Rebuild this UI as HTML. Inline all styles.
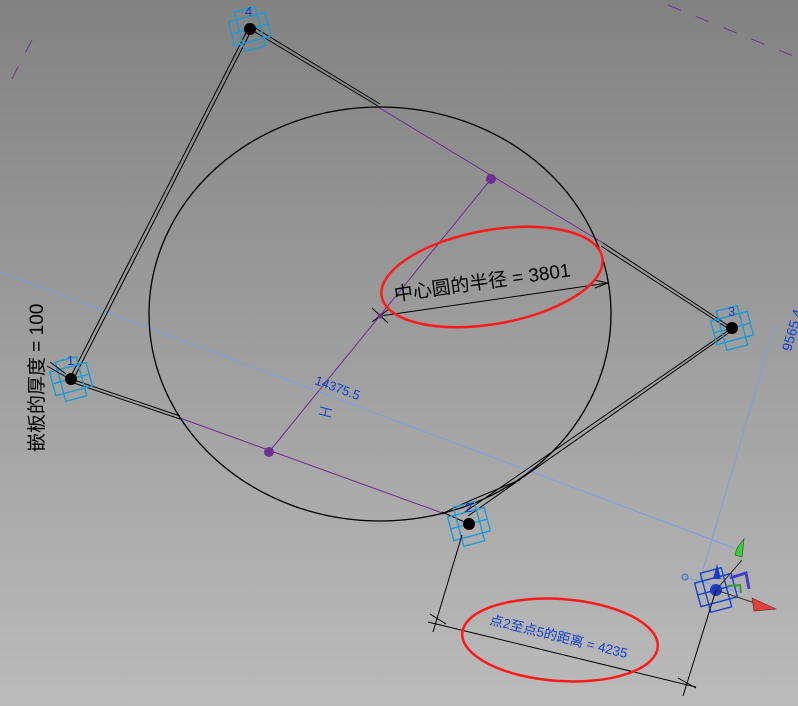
<!DOCTYPE html>
<html><head><meta charset="utf-8"><style>
html,body{margin:0;padding:0;}
body{width:798px;height:706px;overflow:hidden;background:linear-gradient(#828282,#bbbbbb);}
svg{display:block}
text{font-family:"Liberation Sans","Noto Sans CJK SC",sans-serif;}
</style></head><body>
<svg width="798" height="706" viewBox="0 0 798 706" xmlns="http://www.w3.org/2000/svg">
<line x1="668" y1="5" x2="798" y2="58" stroke="#6a3a8a" stroke-width="1" stroke-dasharray="14,16"/>
<line x1="32" y1="40" x2="5" y2="92" stroke="#6a3a8a" stroke-width="1" stroke-dasharray="14,16"/>
<g stroke="#7c9ee8" stroke-width="1" fill="none">
<line x1="0" y1="272" x2="734" y2="548"/>
<line x1="775" y1="325" x2="700" y2="580"/>
<line x1="684" y1="577" x2="740" y2="592"/>
</g>
<circle cx="685" cy="577" r="3" fill="#8aa6d8" stroke="#4a6aa8"/>
<g stroke="#6e2f8e" stroke-width="1" fill="none">
<line x1="378" y1="107" x2="603" y2="243"/>
<line x1="180" y1="418" x2="445" y2="514"/>
<line x1="491" y1="179" x2="269" y2="452"/>
</g>
<circle cx="491" cy="179" r="5" fill="#6e2f8e"/>
<circle cx="269" cy="452" r="5" fill="#6e2f8e"/>
<ellipse cx="380" cy="314" rx="231" ry="207" fill="none" stroke="#000" stroke-width="1.3"/>
<g stroke="#000" stroke-width="1" fill="none">
<line x1="250" y1="29" x2="378" y2="106"/><line x1="252" y1="26" x2="380" y2="104"/>
<line x1="248" y1="29" x2="70" y2="378"/><line x1="251" y1="31" x2="73" y2="380"/>
<line x1="71" y1="379" x2="180" y2="416"/><line x1="71" y1="382" x2="180" y2="419"/>
<line x1="732" y1="328" x2="603" y2="243"/><line x1="732" y1="331" x2="601" y2="246"/>
<line x1="732" y1="328" x2="462" y2="514"/><line x1="730" y1="332" x2="468" y2="516"/>
<line x1="469" y1="524" x2="442" y2="512"/>
<path d="M442 514 Q460 504 520 480" />
</g>
<g stroke="#1a9ad6" stroke-width="1" fill="none">
<g transform="translate(250,29) rotate(-15) scale(1.35)"><rect x="-14" y="-9" width="28" height="18"/><rect x="-8" y="-15" width="16" height="30"/><line x1="-14" y1="0" x2="14" y2="0"/></g>
<g transform="translate(71,379) rotate(-15) scale(1.35)"><rect x="-14" y="-9" width="28" height="18"/><rect x="-8" y="-15" width="16" height="30"/><line x1="-14" y1="0" x2="14" y2="0"/></g>
<g transform="translate(732,328) rotate(-15) scale(1.35)"><rect x="-14" y="-9" width="28" height="18"/><rect x="-8" y="-15" width="16" height="30"/><line x1="-14" y1="0" x2="14" y2="0"/></g>
<g transform="translate(469,524) rotate(-15) scale(1.35)"><rect x="-14" y="-9" width="28" height="18"/><rect x="-8" y="-15" width="16" height="30"/><line x1="-14" y1="0" x2="14" y2="0"/></g>
</g>
<g stroke="#1040d0" stroke-width="1" fill="none">
<g transform="translate(716,590) rotate(-15) scale(1.35)"><rect x="-14" y="-9" width="28" height="18"/><rect x="-8" y="-15" width="16" height="30"/><line x1="-14" y1="0" x2="14" y2="0"/></g>
</g>
<g fill="#000">
<circle cx="250" cy="29" r="6"/><circle cx="71" cy="379" r="6"/><circle cx="732" cy="328" r="6"/><circle cx="469" cy="524" r="6"/>
</g>
<g fill="#1040d0" font-size="13">
<text x="245" y="16">4</text><text x="67" y="365">1</text><text x="728" y="316">3</text><text x="465" y="512">2</text>
</g>
<circle cx="716" cy="590" r="6" fill="#1a3ad0"/>
<line x1="716" y1="590" x2="742" y2="560" stroke="#333"/>
<polygon points="737,548 744,539 742,557 735,555" fill="#3ccf3c" stroke="#225522" stroke-width="0.6"/>
<line x1="716" y1="590" x2="755" y2="603" stroke="#333"/>
<polygon points="752,598 776,609 754,611" fill="#e04040" stroke="#662222" stroke-width="0.6"/>
<polygon points="713,579 717,564 721,579" fill="#1a3ad0"/>
<path d="M730 578 L746 573 L749 589" stroke="#4040c0" stroke-width="3" fill="none"/>
<path d="M728 586 L740 585 L741 593" stroke="#3a9a3a" stroke-width="2" fill="none"/>
<line x1="380" y1="316" x2="608" y2="283" stroke="#000" stroke-width="1"/>
<path d="M594 280 L608 283 L595 288" stroke="#000" fill="none"/>
<path d="M372 308 L388 323 M372 322 L389 309" stroke="#000" stroke-width="1"/>
<circle cx="380" cy="316" r="2.5" fill="#6e2f8e"/>
<text font-size="19" fill="#000" transform="translate(395,301) rotate(-8)">中心圆的半径 = 3801</text>
<ellipse cx="492" cy="277" rx="112" ry="47" fill="none" stroke="#ff1a1a" stroke-width="2.5" transform="rotate(-10 492 277)"/>
<text font-size="19" fill="#000" transform="translate(43,452) rotate(-90)">嵌板的厚度 = 100</text>
<path d="M47 366 L68 378 M50 362 L66 374" stroke="#000" fill="none"/>
<text font-size="13" fill="#1040d0" transform="translate(314,384) rotate(20)">14375.5</text>
<path d="M320 407 L332 410 M326 408 L325 416 M319 414 L331 417" stroke="#1040d0" fill="none"/>
<text font-size="14" fill="#1040d0" transform="translate(791,352) rotate(-74)">9565.4</text>
<g stroke="#000" stroke-width="1" fill="none">
<line x1="462" y1="535" x2="433" y2="632"/>
<line x1="716" y1="590" x2="683" y2="696"/>
<line x1="428" y1="622" x2="696" y2="687"/>
<path d="M430 614 L446 624 M678 678 L696 688"/>
</g>
<text font-size="13.5" fill="#1040d0" transform="translate(489,624) rotate(14)">点2至点5的距离 = 4235</text>
<ellipse cx="560" cy="640" rx="98" ry="41" fill="none" stroke="#ff1a1a" stroke-width="2.5" transform="rotate(4 560 640)"/>
</svg>
</body></html>
